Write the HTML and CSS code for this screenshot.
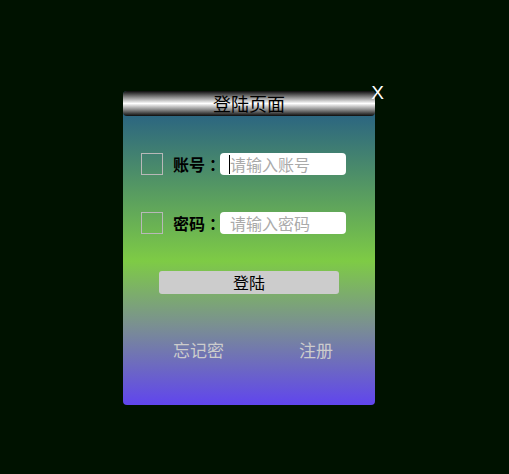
FILE: index.html
```html
<!DOCTYPE html>
<html lang="zh">
<head>
<meta charset="utf-8">
<title>登陆页面</title>
<link rel="stylesheet" href="styles.css">
</head>
<body>
<div class="card">
  <div class="header">登陆页面</div>
  <span class="close">X</span>
  <div class="form">
    <div class="row">
      <span class="check"></span>
      <span class="label">账号<span class="colon">：</span></span>
      <div class="input"><span class="caret"></span><span class="ph">请输入账号</span></div>
    </div>
    <div class="row">
      <span class="check"></span>
      <span class="label">密码<span class="colon">：</span></span>
      <div class="input"><span class="ph">请输入密码</span></div>
    </div>
    <div class="btn">登陆</div>
    <div class="links">
      <span class="link">忘记密</span>
      <span class="link">注册</span>
    </div>
  </div>
</div>
</body>
</html>
```
FILE: styles.css
```css
html, body {
  margin: 0;
  padding: 0;
  background: #001200;
  font-family: "Noto Sans CJK SC", "Noto Sans", sans-serif;
}
body {
  width: 509px;
  height: 474px;
  overflow: hidden;
}
.card {
  position: relative;
  margin: 91px 0 0 123px;
  width: 252px;
  height: 314px;
  border-radius: 4px;
  background: linear-gradient(#276181 0px, #2c6680 25px, #7ecb45 170px, #7a8f92 235px, #6045ee 314px);
  display: flex;
  flex-direction: column;
}
.header {
  height: 25px;
  border-radius: 4px;
  background: linear-gradient(#0c0c0c 0%, #8a8a8a 25%, #ffffff 50%, #8a8a8a 75%, #0c0c0c 100%);
  color: #000;
  font-size: 18px;
  line-height: 25px;
  text-align: center;
}
.close {
  position: absolute;
  right: -9px;
  top: -9px;
  color: #fff;
  font-family: "Liberation Sans", sans-serif;
  font-size: 19px;
  line-height: 22px;
}
.form {
  display: flex;
  flex-direction: column;
  padding: 37px 0 0 18px;
}
.row {
  display: flex;
  align-items: center;
  height: 22px;
  margin-bottom: 37px;
}
.check {
  flex-shrink: 0;
  width: 20px;
  height: 20px;
  border: 1px solid #b8b8b8;
}
.label {
  flex-shrink: 0;
  margin-left: 10px;
  margin-right: -5px;
  font-size: 16px;
  font-weight: bold;
  color: #000;
  white-space: nowrap;
}
.colon {
  margin-left: 4px;
}
.input {
  flex-shrink: 0;
  display: flex;
  align-items: center;
  width: 126px;
  height: 22px;
  background: #fff;
  border-radius: 4px;
  padding-left: 9px;
  box-sizing: border-box;
  position: relative;
}
.caret {
  position: absolute;
  left: 9px;
  top: 2px;
  width: 1px;
  height: 19px;
  background: #000;
}
.ph {
  margin-left: 1px;
  color: #aaaaaa;
  font-size: 16px;
  line-height: 22px;
  white-space: nowrap;
}
.btn {
  margin: 0 0 0 18px;
  width: 180px;
  height: 23px;
  border-radius: 3px;
  background: #cccccc;
  color: #000;
  font-size: 16px;
  line-height: 23px;
  text-align: center;
}
.links {
  display: flex;
  margin-top: 45px;
  padding-left: 32px;
  gap: 75px;
}
.link {
  color: #cccccc;
  font-size: 17px;
  line-height: 22px;
}
```
